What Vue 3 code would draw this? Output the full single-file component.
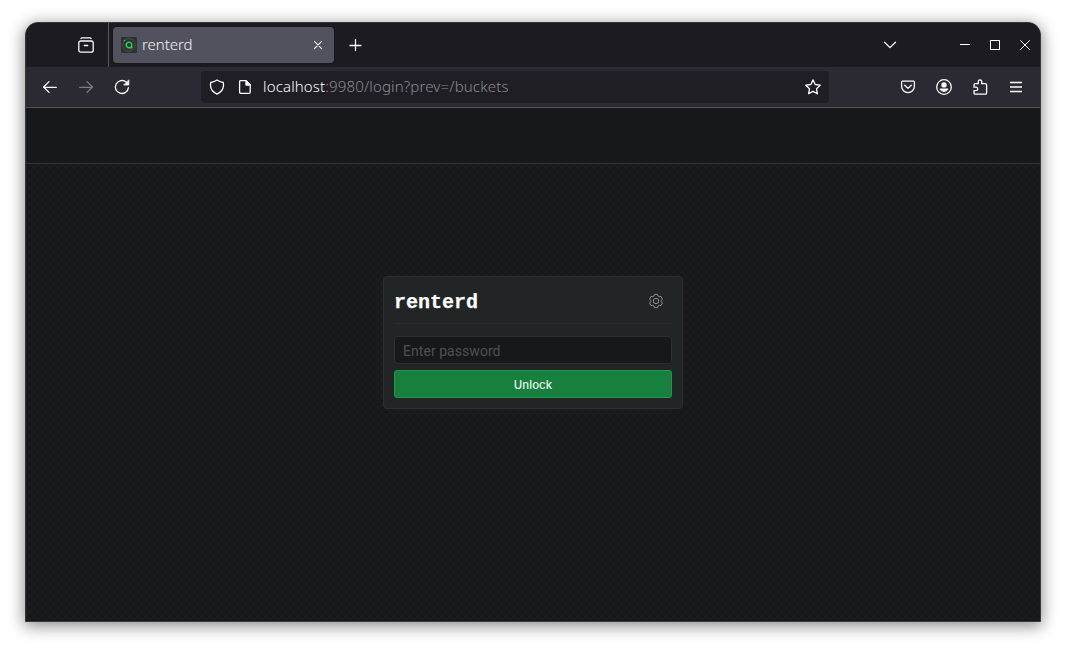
<script setup>
import { ref } from 'vue'
const password = ref('')
</script>

<template>
  <div class="desktop">
    <main class="window">
      <header class="tabbar">
        <div class="overview">
          <svg width="16" height="16" viewBox="0 0 16 16" class="line">
            <path d="M3 1.6 Q3.3 .8 4.2 .8 H11.8 Q12.7 .8 13 1.6" />
            <rect x=".8" y="4" width="14.4" height="11.2" rx="2" />
            <path d="M6.3 8.5 H9.7" />
          </svg>
        </div>
        <div class="tab">
          <svg class="favicon" width="16" height="16" viewBox="0 0 16 16">
            <rect width="16" height="16" rx="1" fill="#30302f" />
            <circle cx="8" cy="8" r="6.3" fill="none" stroke="#555857" stroke-width=".8" />
            <path d="M11.2 10.8 H8 A2.8 2.8 0 1 1 10.4 9.4 L11.2 10.8" fill="none" stroke="#1ed660" stroke-width="1.5" />
            <circle cx="3.6" cy="3.5" r=".8" fill="#1ed660" />
          </svg>
          <span class="tab-title">renterd</span>
          <svg class="tab-close line" width="10" height="10" viewBox="0 0 10 10"><path d="M1.4 1.4 8.6 8.6 M8.6 1.4 1.4 8.6" /></svg>
        </div>
        <svg class="new-tab line" width="13" height="14" viewBox="0 0 13 14"><path d="M6.5 1.5 V12.5 M1 7.5 H12" /></svg>
        <svg class="tab-list line" width="14" height="8" viewBox="0 0 14 8"><path d="M1.5 1.3 7 6.6 12.5 1.3" /></svg>
        <div class="controls">
          <svg width="10" height="10" viewBox="0 0 10 10"><path d="M0 4.5 H10" /></svg>
          <svg width="10" height="10" viewBox="0 0 10 10"><rect x=".5" y=".5" width="9" height="9" /></svg>
          <svg width="10" height="10" viewBox="0 0 10 10"><path d="M.3 .3 9.7 9.7 M9.7 .3 .3 9.7" /></svg>
        </div>
      </header>

      <nav class="toolbar">
        <div class="nav-buttons">
          <svg class="line" width="16" height="16" viewBox="0 0 16 16"><path d="M7 2.6 1.6 8 7 13.4 M1.6 8.3 H14.3" /></svg>
          <svg class="line muted" width="16" height="16" viewBox="0 0 16 16"><path d="M9 2.6 14.4 8 9 13.4 M14.4 8.3 H1.7" /></svg>
          <svg class="line" width="16" height="16" viewBox="0 0 16 16">
            <path d="M12.2 3.1 A6.5 6.5 0 1 0 14.4 8.6" />
            <path d="M14.8 1.2 V6 H10Z" fill="#fbfbfe" stroke-width=".8" />
          </svg>
        </div>
        <div class="urlbar">
          <svg class="line" width="16" height="16" viewBox="0 0 16 16"><path d="M8 .9 C9.5 2 12 3 14.2 3.5 C15.3 8.6 12.8 12.8 8 15.1 C3.2 12.8 .7 8.6 1.8 3.5 C4 3 6.5 2 8 .9Z" /></svg>
          <svg class="line page-icon" width="16" height="16" viewBox="0 0 16 16">
            <path d="M3.5 1.7 H9 L13.2 6 V13 Q13.2 14.3 12 14.3 H3.9 Q2.6 14.3 2.6 13 V2.8 Q2.6 1.7 3.5 1.7Z" />
            <path d="M9 1.7 V6 H13.2Z" fill="#fbfbfe" />
          </svg>
          <span class="url"><b>localhost</b>:9980/login?prev=/buckets</span>
          <svg class="line star" width="16" height="16" viewBox="0 0 16 16"><path d="M8 .9 10.2 5.5 15.2 6.2 11.5 9.7 12.4 14.8 8 12.4 3.6 14.8 4.5 9.7 .8 6.2 5.8 5.5Z" /></svg>
        </div>
        <div class="tools">
          <svg class="line" width="16" height="16" viewBox="0 0 16 16"><path d="M2.5 2.1 H13.5 Q14.4 2.1 14.4 3 V7.2 A6.4 6.4 0 0 1 1.6 7.2 V3 Q1.6 2.1 2.5 2.1Z M4.7 6.2 8 9.4 11.3 6.2" /></svg>
          <svg class="line" width="16" height="16" viewBox="0 0 16 16">
            <circle cx="8" cy="8" r="7.3" />
            <circle cx="8" cy="5.9" r="2.7" fill="#fbfbfe" stroke="none" />
            <path d="M3.8 9.5 H12.2 V10.5 Q10.8 12.9 8 12.9 Q5.2 12.9 3.8 10.5Z" fill="#fbfbfe" stroke="none" />
          </svg>
          <svg class="line" width="16" height="16" viewBox="0 0 16 16"><path d="M3.3 4.7 H6.3 V2.5 A1.7 1.7 0 0 1 9.7 2.5 V4.7 H13.2 Q14.6 4.7 14.6 6.1 V13.9 Q14.6 15.2 13.3 15.2 H3.3 Q2 15.2 2 13.9 V11.6 H4 A1.7 1.7 0 0 0 4 8.2 H2 V6 Q2 4.7 3.3 4.7Z" /></svg>
          <svg class="line menu" width="16" height="16" viewBox="0 0 16 16"><path d="M2 3.5 H14 M2 8 H14 M2 12.5 H14" /></svg>
        </div>
      </nav>

      <section class="page">
        <div class="page-header"></div>
        <form class="card" @submit.prevent>
          <div class="card-head">
            <h1>renterd</h1>
            <svg class="gear" width="16" height="16" viewBox="0 0 16 16">
              <path d="M6.5 1.4 H9.5 L10.1 3.1 11.2 3.7 13 3.4 14.4 5.9 13.3 7.4 V8.6 L14.4 10.1 13 12.6 11.2 12.3 10.1 12.9 9.5 14.6 H6.5 L5.9 12.9 4.8 12.3 3 12.6 1.6 10.1 2.7 8.6 V7.4 L1.6 5.9 3 3.4 4.8 3.7 5.9 3.1Z" />
              <circle cx="8" cy="8" r="2.7" />
            </svg>
          </div>
          <input v-model="password" type="password" placeholder="Enter password" />
          <button type="submit">Unlock</button>
        </form>
      </section>
    </main>
  </div>
</template>

<style>
body { margin: 0; background: #fff; overflow: hidden; }
</style>

<style scoped>
* { box-sizing: border-box; }
svg { display: block; flex: none; }
.desktop { height: 650px; padding: 22px 25px 28px; background: #fff; }
.window {
  display: flex; flex-direction: column; height: 600px; overflow: hidden;
  border: 1px solid #38383b; border-radius: 13px 13px 0 0; background: #18191b;
  box-shadow: 0 3px 16px 1px rgba(0, 0, 0, .46);
  font-family: "Noto Sans", sans-serif;
}
.line { fill: none; stroke: #fbfbfe; stroke-width: 1.3; stroke-linecap: round; stroke-linejoin: round; }
.tabbar { display: flex; align-items: center; height: 44px; flex: none; background: #1c1b22; }
.overview { display: flex; align-items: center; justify-content: flex-end; width: 83px; height: 44px; padding-right: 14px; border-right: 1px solid #56565c; }
.tab { display: flex; align-items: center; width: 221px; height: 36px; margin-left: 4px; padding: 0 11px 0 8px; border-radius: 4px; background: #52525e; box-shadow: 0 0 3px rgba(0, 0, 0, .4); }
.tab-title { margin: -2px 0 0 5px; color: #f4f4f8; font-size: 15px; font-weight: 300; line-height: 20px; letter-spacing: -.05px; }
.tab-close { margin-left: auto; stroke-width: 1.1; }
.new-tab { margin-left: 15px; }
.tab-list { margin-left: auto; }
.controls { display: flex; gap: 20px; margin: 0 10px 0 63px; fill: none; stroke: #fff; stroke-width: 1; }
.toolbar { display: flex; align-items: center; height: 41px; flex: none; border-bottom: 1px solid #515156; background: #2b2a33; }
.nav-buttons { display: flex; gap: 20px; margin-left: 16px; }
.muted { opacity: .4; }
.urlbar { display: flex; align-items: center; width: 628px; height: 32px; margin-left: 71px; padding: 0 8px; border-radius: 4px; background: #1f1e25; }
.page-icon { margin-left: 12px; }
.url { margin: -2px 0 0 10px; color: #8b8a91; font-size: 15px; font-weight: 300; line-height: 20px; letter-spacing: .15px; white-space: nowrap; }
.url b { color: #fbfbfe; font-weight: 300; }
.star { margin-left: auto; }
.tools { display: flex; gap: 20px; margin: 0 16px 0 auto; }
.menu { stroke-linecap: butt; }
.page {
  flex: 1; background-color: #1a1b1d;
  background-image: radial-gradient(circle, #161719 1.4px, transparent 2.6px), radial-gradient(circle, #161719 1.4px, transparent 2.6px);
  background-size: 8px 8px; background-position: 0 0, 4px 4px;
}
.page-header { height: 56px; border-bottom: 1px solid #313436; background: #17181a; }
.card { width: 300px; height: 133px; margin: 112px auto 0 357px; padding: 0 10px; border: 1px solid #2b2f31; border-radius: 4px; background: #212526; }
.card-head { display: flex; align-items: center; justify-content: space-between; height: 47px; padding-right: 8px; border-bottom: 1px solid #292d2f; }
h1 { margin: 5px 0 0; color: #fff; font: 700 20px/26px "Liberation Mono", monospace; -webkit-text-stroke: .25px #fff; }
.gear { margin-top: 2px; fill: none; stroke: #8e9294; stroke-width: 1; stroke-linejoin: round; }
input { display: block; width: 278px; height: 28px; margin-top: 12px; padding: 1px 8px 0; border: 1px solid #2c3032; border-radius: 4px; outline: 0; background: #17181a; color: #eee; font: 14px/20px Roboto, sans-serif; letter-spacing: .05px; }
input::placeholder { color: #4d5153; opacity: 1; }
button { display: block; width: 278px; height: 28px; margin-top: 6px; padding: 2px 0 0; border: 1px solid #1a9a4a; border-radius: 3px; background: #18803e; color: #e3f8eb; font: 500 11.5px/20px Inter, sans-serif; }
</style>
